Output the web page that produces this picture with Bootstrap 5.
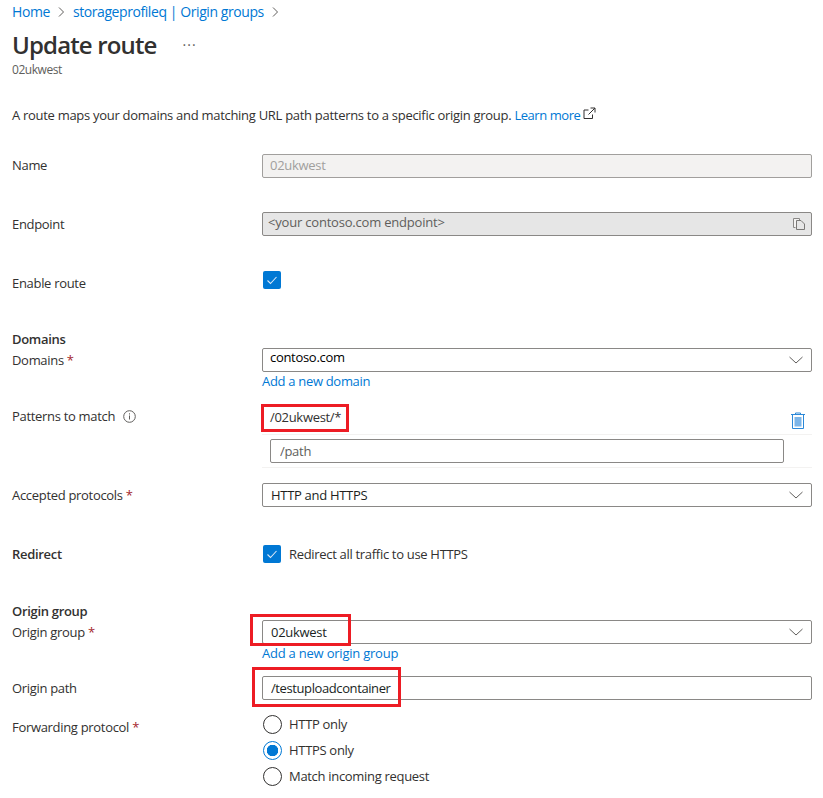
<!DOCTYPE html>
<html lang="en">
<head>
<meta charset="utf-8">
<title>Update route</title>
<link href="https://cdn.jsdelivr.net/npm/bootstrap@5.3.0/dist/css/bootstrap.min.css" rel="stylesheet">
<style>
body{font-family:"Open Sans","Noto Sans",sans-serif;font-size:13px;letter-spacing:-.31px;line-height:16px;color:#323130;background:#fff;}
a{color:#0078d4;text-decoration:none;}
.rt-page{padding:0 11px 0 12px;width:823px;}
.rt-crumbs{height:24px;font-size:14px;letter-spacing:-.42px;}
.rt-crumbs svg{margin:0 8px;}
.rt-title{margin:5px 0 1px;height:32px;font-size:24px;line-height:32px;font-weight:600;letter-spacing:-.85px;color:#323130;}
.rt-dots{margin-left:26px;color:#605e5c;font-size:14px;line-height:20px;font-weight:400;letter-spacing:1px;}
.rt-sub{font-size:12px;color:#605e5c;letter-spacing:-.45px;}
.rt-desc{margin-top:29px;letter-spacing:-.29px;}
.rt-desc a{letter-spacing:-.45px;}
.rt-row{display:flex;align-items:flex-start;}
.rt-label{width:250px;flex:none;padding-top:4px;}
.rt-label-up{padding-top:3px;}
.rt-label-red{padding-top:1px;}
.rt-field{width:550px;flex:none;position:relative;}
.rt-head{height:16px;font-weight:600;}
.rt-req{color:#a4262c;}
.rt-m1{margin-top:1px;}.rt-m15{margin-top:15px;}.rt-m31{margin-top:31px;}.rt-m34{margin-top:34px;}.rt-m35{margin-top:35px;}.rt-m36{margin-top:36px;}.rt-m38{margin-top:38px;}.rt-m40{margin-top:40px;}.rt-h24{height:24px;}
.form-control.rt-input,.form-select.rt-input{height:24px;min-height:24px;font-size:13px;letter-spacing:-.3px;line-height:16px;padding:0 8px;border:1px solid #8a8886;border-radius:2px;color:#201f1e;box-shadow:none;}
.form-select.rt-input{background-image:url("data:image/svg+xml,%3Csvg xmlns='http://www.w3.org/2000/svg' viewBox='0 0 14 8'%3E%3Cpath d='M.5 1l6.500 6 6.500-6' fill='none' stroke='%23605e5c' stroke-width='1'/%3E%3C/svg%3E");background-size:14px 8px;background-position:right 8px center;padding-right:30px;}
.form-select.rt-input.rt-raised{padding:0 30px 6px 7px;color:#000;}
.form-control.rt-input.rt-path{letter-spacing:-.4px;}
.form-control.rt-input.rt-name{padding:0 8px 2px 7px;}
.form-control.rt-name:disabled{background:#f3f2f1;border-color:#a19f9d;color:#a19f9d;opacity:1;}
.rt-endpoint{height:24px;background:#e6e6e6;border:1px solid #8a8886;border-radius:2px;padding:0 6px 0 5px;color:#605e5c;letter-spacing:-.2px;}
.rt-endpoint span{position:relative;top:-2px;}
.rt-link-line{height:16px;margin-top:1px;}
.rt-link-wide{letter-spacing:-.22px;}
.form-check-input.rt-box{width:18px;height:18px;margin:0 0 0 1px;border:0;border-radius:2px;background-color:#0078d4;background-image:url("data:image/svg+xml,%3Csvg xmlns='http://www.w3.org/2000/svg' viewBox='0 0 18 18'%3E%3Cpath d='M4.500 9.500l3 3 6-6.500' fill='none' stroke='%23dbe9f7' stroke-width='1.100'/%3E%3C/svg%3E");background-size:18px 18px;flex:none;box-shadow:none;}
.rt-pat-top{height:31px;border-bottom:1px solid #f3f2f1;padding:5px 0 0 8px;}
.rt-pat-bottom{height:33px;border-bottom:1px solid #f3f2f1;padding:4px 28px 0 8px;}
.rt-pat-bottom .rt-input::placeholder{color:#605e5c;opacity:1;}
.rt-pat-bottom .form-control.rt-input{padding-left:9px;}
.rt-trash{position:absolute;right:7px;top:8px;}
.rt-mark{position:absolute;border:3px solid #ed1c24;pointer-events:none;background:transparent;}
.rt-mark-a{left:-1px;top:0;width:88px;height:28px;}
.rt-mark-b{left:-12px;top:-6px;width:101px;height:32px;}
.rt-mark-c{left:-10px;top:-9px;width:149px;height:40px;}
.rt-radio{height:18px;margin-bottom:8px;}
.form-check-input.rt-rad{width:19px;height:19px;margin:0 0 0 1px;border:1px solid #323130;background:#fff;flex:none;box-shadow:none;}
.form-check-input.rt-rad:checked{border-color:#0078d4;background:#fff radial-gradient(circle,#0078d4 0,#0078d4 5.500px,#fff 6px);}
.rt-opt{margin-left:8px;}
.rt-rad + .rt-opt{margin-left:7px;}
.rt-info{margin-left:5px;vertical-align:-2px;}
</style>
</head>
<body>
<div class="rt-page">
  <nav class="rt-crumbs d-flex align-items-center">
    <a href="#">Home</a>
    <svg width="7" height="12" viewBox="0 0 7 12"><path d="M1 1.500l4.500 4.500-4.500 4.500" fill="none" stroke="#605e5c"/></svg>
    <a href="#">storageprofileq | Origin groups</a>
    <svg width="7" height="12" viewBox="0 0 7 12"><path d="M1 1.500l4.500 4.500-4.500 4.500" fill="none" stroke="#605e5c"/></svg>
  </nav>
  <h1 class="rt-title d-flex align-items-center">Update route <span class="rt-dots">···</span></h1>
  <div class="rt-sub">02ukwest</div>
  <p class="rt-desc mb-0">A route maps your domains and matching URL path patterns to a specific origin group. <a href="#">Learn more</a>
    <svg width="13" height="13" viewBox="0 0 13 13" class="align-baseline"><path d="M9.500 7.500v4h-8.500v-8.500h4.500M7.500 1h4.500v4.500M12 1l-6.500 6.500" fill="none" stroke="#323130"/></svg></p>

  <div class="rt-row rt-m31">
    <div class="rt-label rt-label-up">Name</div>
    <div class="rt-field"><input class="form-control rt-input rt-name" value="02ukwest" disabled></div>
  </div>
  <div class="rt-row rt-m34">
    <div class="rt-label">Endpoint</div>
    <div class="rt-field"><div class="rt-endpoint d-flex align-items-center justify-content-between"><span>&lt;your contoso.com endpoint&gt;</span>
      <svg width="12" height="12" viewBox="0 0 12 12"><path d="M2.500 9.500h-2v-9h6v1.500" fill="#f3f2f1" stroke="#8a8886"/><path d="M3.500 2.500h4.500l3.500 3.500v5.500h-8z" fill="#e6e6e6" stroke="#7a7876"/></svg></div></div>
  </div>
  <div class="rt-row rt-m35 rt-h24">
    <div class="rt-label">Enable route</div>
    <div class="rt-field"><input type="checkbox" class="form-check-input rt-box d-block" checked></div>
  </div>

  <div class="rt-head rt-m36">Domains</div>
  <div class="rt-row rt-m1">
    <div class="rt-label">Domains <span class="rt-req">*</span></div>
    <div class="rt-field">
      <select class="form-select rt-input rt-raised"><option>contoso.com</option></select>
      <div class="rt-link-line"><a href="#">Add a new domain</a></div>
    </div>
  </div>
  <div class="rt-row rt-m15">
    <div class="rt-label">Patterns to match
      <svg class="rt-info" width="13" height="13" viewBox="0 0 13 13"><circle cx="6.500" cy="6.500" r="5.800" fill="none" stroke="#605e5c"/><path d="M6.500 5.500v4M6.500 3.300v1.200" stroke="#605e5c"/></svg></div>
    <div class="rt-field">
      <div class="rt-pat-top">/02ukwest/*</div>
      <div class="rt-pat-bottom"><input class="form-control rt-input" placeholder="/path"></div>
      <svg class="rt-trash" width="14" height="17" viewBox="0 0 14 17"><path d="M4.500 2.500v-1.500h5v1.500M0 2.500h14M1.500 2.500v14h11v-14" fill="none" stroke="#2b88d8"/><rect x="3.500" y="5" width="7" height="9.500" fill="#7cb5e8"/></svg>
      <div class="rt-mark rt-mark-a"></div>
    </div>
  </div>
  <div class="rt-row rt-m15">
    <div class="rt-label">Accepted protocols <span class="rt-req">*</span></div>
    <div class="rt-field"><select class="form-select rt-input"><option>HTTP and HTTPS</option></select></div>
  </div>
  <div class="rt-row rt-m38">
    <div class="rt-label rt-label-red"><span class="fw-semibold">Redirect</span></div>
    <div class="rt-field d-flex align-items-center"><input type="checkbox" class="form-check-input rt-box" checked><span class="rt-opt">Redirect all traffic to use HTTPS</span></div>
  </div>

  <div class="rt-head rt-m40">Origin group</div>
  <div class="rt-row rt-m1">
    <div class="rt-label">Origin group <span class="rt-req">*</span></div>
    <div class="rt-field">
      <select class="form-select rt-input"><option>02ukwest</option></select>
      <div class="rt-link-line"><a href="#" class="rt-link-wide">Add a new origin group</a></div>
      <div class="rt-mark rt-mark-b"></div>
    </div>
  </div>
  <div class="rt-row rt-m15">
    <div class="rt-label">Origin path</div>
    <div class="rt-field"><input class="form-control rt-input rt-path" value="/testuploadcontainer"><div class="rt-mark rt-mark-c"></div></div>
  </div>
  <div class="rt-row rt-m15">
    <div class="rt-label">Forwarding protocol <span class="rt-req">*</span></div>
    <div class="rt-field">
      <div class="rt-radio d-flex align-items-center"><input type="radio" name="fp" class="form-check-input rt-rad"><span class="rt-opt">HTTP only</span></div>
      <div class="rt-radio d-flex align-items-center"><input type="radio" name="fp" class="form-check-input rt-rad" checked><span class="rt-opt">HTTPS only</span></div>
      <div class="rt-radio d-flex align-items-center"><input type="radio" name="fp" class="form-check-input rt-rad"><span class="rt-opt">Match incoming request</span></div>
    </div>
  </div>
</div>
<script src="https://cdn.jsdelivr.net/npm/bootstrap@5.3.0/dist/js/bootstrap.bundle.min.js"></script>
</body>
</html>
